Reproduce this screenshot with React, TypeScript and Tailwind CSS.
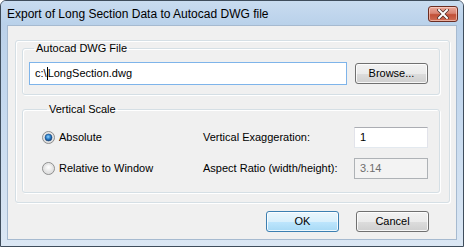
import React from "react";

function Radio({ checked }: { checked: boolean }) {
  return (
    <svg width="13" height="13" viewBox="0 0 13 13" className="shrink-0">
      <defs>
        <radialGradient id={checked ? "rbg1" : "rbg0"} cx="50%" cy="40%" r="60%">
          <stop offset="0%" stopColor="#ffffff" />
          <stop offset="100%" stopColor="#d6d6d6" />
        </radialGradient>
        <radialGradient id="dot" cx="45%" cy="40%" r="60%">
          <stop offset="0%" stopColor="#8fd3ff" />
          <stop offset="55%" stopColor="#2a7dc8" />
          <stop offset="100%" stopColor="#0f3f7a" />
        </radialGradient>
      </defs>
      <circle cx="6.5" cy="6.5" r="6" fill={`url(#${checked ? "rbg1" : "rbg0"})`} stroke="#8e8f8f" strokeWidth="1" />
      <circle cx="6.5" cy="6.5" r="4.5" fill="none" stroke="#e4e4e4" strokeWidth="1" />
      {checked && <circle cx="6.5" cy="6.5" r="3.5" fill="url(#dot)" stroke="#1c4a7e" strokeWidth="0.6" />}
    </svg>
  );
}

function Btn({ label, def }: { label: string; def?: boolean }) {
  return (
    <div
      className={
        "w-[73px] h-[21px] rounded-[3px] border flex items-center justify-center text-[11px] leading-none text-black shadow-[inset_0_0_0_1px_rgba(255,255,255,0.8)] " +
        (def
          ? "border-[#3c7fb1] bg-[linear-gradient(to_bottom,#eaf6fd_0%,#d9f0fc_50%,#bee6fd_51%,#a7d9f5_100%)]"
          : "border-[#707070] bg-[linear-gradient(to_bottom,#f2f2f2_0%,#ebebeb_50%,#dddddd_51%,#cfcfcf_100%)]")
      }
    >
      {label}
    </div>
  );
}

export default function App() {
  return (
    <div className="w-[464px] h-[247px] flex flex-col border border-[#3f4d5c] rounded-t-[6px] overflow-hidden bg-[linear-gradient(to_bottom,#b8cfe8_0%,#c4d8ee_40%,#dbe7f4_100%)] font-['Liberation_Sans',Arial,sans-serif]">
      <div className="h-[24px] shrink-0 flex items-center justify-between pl-[6px] pr-[5px] bg-[linear-gradient(to_bottom,#c9dcf0_0%,#b9d1ea_100%)]">
        <span className="text-[12px] text-black leading-none mt-[1px]">Export of Long Section Data to Autocad DWG file</span>
        <div className="w-[30px] h-[16px] mt-[2px] rounded-[3px] border border-[#6b2d22] bg-[linear-gradient(to_bottom,#eba99b_0%,#d98472_45%,#c14f36_55%,#cf6d55_100%)] shadow-[inset_0_0_0_1px_rgba(255,220,210,0.6)] flex items-center justify-center">
          <svg width="12" height="10" viewBox="0 0 12 10">
            <path d="M2 1 L10 9 M10 1 L2 9" stroke="#4a2a25" strokeWidth="3.4" strokeLinecap="square" />
            <path d="M2 1 L10 9 M10 1 L2 9" stroke="#ffffff" strokeWidth="2" strokeLinecap="square" />
          </svg>
        </div>
      </div>
      <div className="flex-1 mx-[6px] mb-[6px] border border-[#a6bad0] bg-[#f0f0f0] flex flex-col text-[11px] text-black">
        <div className="mt-[14px] ml-[7px] w-[435px] h-[163px] border border-[#d5dfe5] rounded-[3px] shadow-[inset_1px_1px_0_#ffffff,1px_1px_0_#ffffff] flex flex-col">
          <fieldset className="mt-[1px] ml-[6px] w-[418px] border border-[#d5dfe5] rounded-[3px] shadow-[inset_1px_1px_0_#ffffff,1px_1px_0_#ffffff] pl-[6px] pb-[9px]">
            <legend className="ml-[5px] px-[2px] leading-[13px]">Autocad DWG File</legend>
            <div className="mt-[7px] flex items-center gap-[8px]">
              <div className="w-[318px] h-[23px] border border-[#7eb4ea] bg-white flex items-center pl-[5px]">
                <span>c:\</span>
                <span className="inline-block w-px h-[13px] bg-black" />
                <span>LongSection.dwg</span>
              </div>
              <Btn label="Browse..." />
            </div>
          </fieldset>
          <fieldset className="mt-[8px] ml-[6px] w-[418px] border border-[#d5dfe5] rounded-[3px] shadow-[inset_1px_1px_0_#ffffff,1px_1px_0_#ffffff] pl-[19px] pb-[13px]">
            <legend className="ml-[5px] px-[2px] leading-[13px]">Vertical Scale</legend>
            <div className="mt-[11px] grid grid-cols-[161px_151px_74px] gap-y-[10px]">
              <div className="h-[21px] flex items-center gap-[4px]">
                <Radio checked />
                <span>Absolute</span>
              </div>
              <div className="h-[21px] flex items-center">Vertical Exaggeration:</div>
              <div className="h-[21px] border border-[#abadb3] border-l-[#e2e3ea] border-r-[#e2e3ea] border-b-[#e3e9ef] bg-white flex items-center pl-[5px]">1</div>
              <div className="h-[21px] flex items-center gap-[4px]">
                <Radio checked={false} />
                <span>Relative to Window</span>
              </div>
              <div className="h-[21px] flex items-center">Aspect Ratio (width/height):</div>
              <div className="h-[21px] border border-[#aeb2b6] bg-[#f3f3f3] flex items-center pl-[5px] text-[#6d6d6d]">3.14</div>
            </div>
          </fieldset>
        </div>
        <div className="mt-[8px] flex justify-end gap-[17px] pr-[27px]">
          <Btn label="OK" def />
          <Btn label="Cancel" />
        </div>
      </div>
    </div>
  );
}
